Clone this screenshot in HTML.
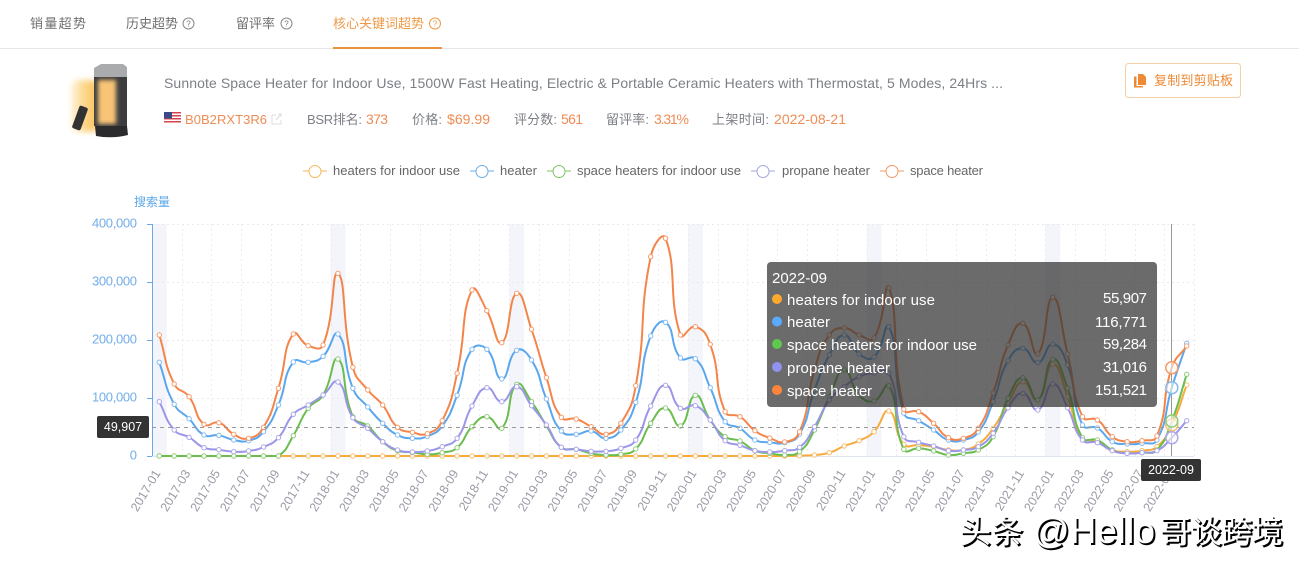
<!DOCTYPE html>
<html><head><meta charset="utf-8"><title>核心关键词趋势</title>
<style>
html,body{margin:0;padding:0;background:#fff;width:1299px;height:564px;overflow:hidden}
svg{display:block}
text{font-family:"Liberation Sans","Noto Sans CJK SC",sans-serif}
.tab{font-size:13px;fill:#6f6f6f}
.g{font-size:13px;fill:#7c7f86}
.t{font-size:14px;fill:#7c7f86}
.o{font-size:14px;fill:#ee8c55}
.yl{font-size:13px;fill:#72aeea;text-anchor:end}
.xl{font-size:12.5px;fill:#9a9ca6;text-anchor:end}
.lg{font-size:13px;fill:#666}
.tt{font-size:15px;fill:#fff}
.tv{font-size:15px;fill:#fff;text-anchor:end}
</style></head><body>
<svg id="s" width="1299" height="564" viewBox="0 0 1299 564" xmlns="http://www.w3.org/2000/svg">
<defs>
<linearGradient id="gl" x1="1" x2="0" y1="0" y2="0"><stop offset="0" stop-color="#fdc056"/><stop offset=".55" stop-color="#fdd88e"/><stop offset="1" stop-color="#fff3dc"/></linearGradient>
<filter id="b1" x="-30%" y="-30%" width="160%" height="160%"><feGaussianBlur stdDeviation="2"/></filter>
<filter id="b2" x="-30%" y="-30%" width="160%" height="160%"><feGaussianBlur stdDeviation="3"/></filter>
</defs>
<!-- tabs -->
<text class="tab" x="30" y="28" textLength="56">销量超势</text>
<text class="tab" x="126" y="28" textLength="52">历史超势</text>
<circle cx="188.500" cy="23.500" r="5.500" fill="none" stroke="#888" stroke-width="1"/><text x="188.500" y="26.500" font-size="8" fill="#777" text-anchor="middle">?</text>
<text class="tab" x="236" y="28" textLength="39">留评率</text>
<circle cx="286.500" cy="23.500" r="5.500" fill="none" stroke="#888" stroke-width="1"/><text x="286.500" y="26.500" font-size="8" fill="#777" text-anchor="middle">?</text>
<text class="tab" x="333" y="28" textLength="91" style="fill:#ee9a48">核心关键词超势</text>
<circle cx="435" cy="23.500" r="5.500" fill="none" stroke="#ee9a48" stroke-width="1"/><text x="435" y="26.500" font-size="8" fill="#ee9a48" text-anchor="middle">?</text>
<rect x="0" y="48" width="1299" height="1" fill="#e6e6e6"/>
<rect x="333" y="47" width="109" height="2" fill="#e8953f"/>
<!-- product image -->
<rect x="71" y="80" width="28" height="52" rx="8" fill="url(#gl)" filter="url(#b2)"/>
<path d="M94 68 L101 64 H123 L127 67 V77 H94Z" fill="#a9abad"/>
<rect x="94" y="77" width="33" height="49" fill="#3d3d3f"/>
<rect x="98" y="80" width="18" height="44" fill="#f8c476" filter="url(#b1)"/>
<path d="M95 126 H127 L128 135 Q112 139 96 136Z" fill="#2b2b2d"/>
<rect x="75.500" y="106" width="9" height="24" rx="2" transform="rotate(20 80 118)" fill="#333"/>
<!-- title -->
<text x="164" y="88" class="t" textLength="839">Sunnote Space Heater for Indoor Use, 1500W Fast Heating, Electric &amp; Portable Ceramic Heaters with Thermostat, 5 Modes, 24Hrs ...</text>
<!-- flag -->
<rect x="164" y="112" width="17" height="12" fill="#fff"/>
<g fill="#d5444f"><rect x="164" y="112" width="17" height="1.500"/><rect x="164" y="115" width="17" height="1.500"/><rect x="164" y="118" width="17" height="1.500"/><rect x="164" y="121" width="17" height="1.500"/></g>
<rect x="164" y="112" width="8" height="6.500" fill="#3b4a86"/>
<text x="185" y="124" class="o" style="font-size:13px" textLength="82">B0B2RXT3R6</text>
<path d="M272 115 H276 M272 115 V124 H281 V120 M276 120 L281 114 M278 114 H281 V117" fill="none" stroke="#ddd" stroke-width="1"/>
<text x="307" y="124" class="g" textLength="55">BSR排名:</text><text x="366" y="124" class="o" textLength="22">373</text>
<text x="412" y="124" class="g" textLength="30">价格:</text><text x="447" y="124" class="o" textLength="43">$69.99</text>
<text x="514" y="124" class="g" textLength="43">评分数:</text><text x="561" y="124" class="o" textLength="22">561</text>
<text x="606" y="124" class="g" textLength="43">留评率:</text><text x="654" y="124" class="o" textLength="35">3.31%</text>
<text x="712" y="124" class="g" textLength="57">上架时间:</text><text x="774" y="124" class="o" textLength="72">2022-08-21</text>
<!-- button -->
<rect x="1125.500" y="63.500" width="115" height="34" rx="3" fill="#fff" stroke="#f5cfa5"/>
<path d="M1138 74 H1143 L1146 77 V85 H1138Z M1134 76.500 H1136.500 V86 H1143 V87.500 H1134Z" fill="#ee8a35"/>
<text x="1154" y="85" font-size="13" fill="#ee8a35" textLength="79">复制到剪贴板</text>
<!-- legend -->
<g fill="#fff" stroke-width="1">
<path d="M303 171 H327" stroke="#f6b65a"/><circle cx="315" cy="171.500" r="6" stroke="#f6b65a"/>
<path d="M470 171 H494" stroke="#6aaee8"/><circle cx="482" cy="171.500" r="6" stroke="#6aaee8"/>
<path d="M547 171 H571" stroke="#7cc564"/><circle cx="559" cy="171.500" r="6" stroke="#7cc564"/>
<path d="M751 171 H775" stroke="#a3a5e0"/><circle cx="763" cy="171.500" r="6" stroke="#a3a5e0"/>
<path d="M880 171 H904" stroke="#f29a66"/><circle cx="892" cy="171.500" r="6" stroke="#f29a66"/>
</g>
<text class="lg" x="333" y="175" textLength="127">heaters for indoor use</text>
<text class="lg" x="500" y="175" textLength="37">heater</text>
<text class="lg" x="577" y="175" textLength="164">space heaters for indoor use</text>
<text class="lg" x="782" y="175" textLength="88">propane heater</text>
<text class="lg" x="910" y="175" textLength="73">space heater</text>
<!-- axis name + labels -->
<text x="134" y="206" font-size="12" fill="#5ba8e8" textLength="36">搜索量</text>
<text class="yl" x="137" y="227.500" textLength="45" >400,000</text>
<text class="yl" x="137" y="285.500" textLength="45">300,000</text>
<text class="yl" x="137" y="343.500" textLength="45">200,000</text>
<text class="yl" x="137" y="401.500" textLength="45">100,000</text>
<text class="yl" x="137" y="459.500">0</text>
<g id="grid"></g>
<g id="lines"></g>
<!-- x labels -->
<g id="xlabels">
<text class="xl" transform="translate(161 473) rotate(-59)">2017-01</text>
<text class="xl" transform="translate(190.800 473) rotate(-59)">2017-03</text>
<text class="xl" transform="translate(220.600 473) rotate(-59)">2017-05</text>
<text class="xl" transform="translate(250.300 473) rotate(-59)">2017-07</text>
<text class="xl" transform="translate(280.100 473) rotate(-59)">2017-09</text>
<text class="xl" transform="translate(309.900 473) rotate(-59)">2017-11</text>
<text class="xl" transform="translate(339.700 473) rotate(-59)">2018-01</text>
<text class="xl" transform="translate(369.500 473) rotate(-59)">2018-03</text>
<text class="xl" transform="translate(399.200 473) rotate(-59)">2018-05</text>
<text class="xl" transform="translate(429 473) rotate(-59)">2018-07</text>
<text class="xl" transform="translate(458.800 473) rotate(-59)">2018-09</text>
<text class="xl" transform="translate(488.600 473) rotate(-59)">2018-11</text>
<text class="xl" transform="translate(518.400 473) rotate(-59)">2019-01</text>
<text class="xl" transform="translate(548.100 473) rotate(-59)">2019-03</text>
<text class="xl" transform="translate(577.900 473) rotate(-59)">2019-05</text>
<text class="xl" transform="translate(607.700 473) rotate(-59)">2019-07</text>
<text class="xl" transform="translate(637.500 473) rotate(-59)">2019-09</text>
<text class="xl" transform="translate(667.300 473) rotate(-59)">2019-11</text>
<text class="xl" transform="translate(697 473) rotate(-59)">2020-01</text>
<text class="xl" transform="translate(726.800 473) rotate(-59)">2020-03</text>
<text class="xl" transform="translate(756.600 473) rotate(-59)">2020-05</text>
<text class="xl" transform="translate(786.400 473) rotate(-59)">2020-07</text>
<text class="xl" transform="translate(816.200 473) rotate(-59)">2020-09</text>
<text class="xl" transform="translate(845.900 473) rotate(-59)">2020-11</text>
<text class="xl" transform="translate(875.700 473) rotate(-59)">2021-01</text>
<text class="xl" transform="translate(905.500 473) rotate(-59)">2021-03</text>
<text class="xl" transform="translate(935.300 473) rotate(-59)">2021-05</text>
<text class="xl" transform="translate(965.100 473) rotate(-59)">2021-07</text>
<text class="xl" transform="translate(994.800 473) rotate(-59)">2021-09</text>
<text class="xl" transform="translate(1024.600 473) rotate(-59)">2021-11</text>
<text class="xl" transform="translate(1054.400 473) rotate(-59)">2022-01</text>
<text class="xl" transform="translate(1084.200 473) rotate(-59)">2022-03</text>
<text class="xl" transform="translate(1114 473) rotate(-59)">2022-05</text>
<text class="xl" transform="translate(1143.700 473) rotate(-59)">2022-07</text>
<text class="xl" transform="translate(1173.500 473) rotate(-59)">2022-09</text>
</g>
<!-- pointer -->
<path d="M152 427.500 H1194" stroke="#999" stroke-width="1" stroke-dasharray="4 4" fill="none"/>
<path d="M1171.500 224 V456" stroke="#999" stroke-width="1"/>
<rect x="97" y="416" width="52" height="22" rx="2" fill="#333"/>
<text x="123" y="431" font-size="12.500" fill="#fff" text-anchor="middle">49,907</text>
<rect x="1141" y="459" width="60" height="22" rx="2" fill="#333"/>
<text x="1171" y="474" font-size="12.500" fill="#fff" text-anchor="middle">2022-09</text>
<g id="hi"></g>
<!-- tooltip -->
<rect x="767" y="262" width="390" height="145" rx="4" fill="#323232" fill-opacity=".72"/>
<text class="tt" x="772" y="283" textLength="55">2022-09</text>
<circle cx="777" cy="299" r="5" fill="#ffa82e"/><text class="tt" x="787" y="305" textLength="148">heaters for indoor use</text><text class="tv" x="1147" y="303" textLength="44">55,907</text>
<circle cx="777" cy="321.500" r="5" fill="#5aaaff"/><text class="tt" x="787" y="327" textLength="43">heater</text><text class="tv" x="1147" y="327" textLength="52">116,771</text>
<circle cx="777" cy="344" r="5" fill="#5fc94c"/><text class="tt" x="787" y="350" textLength="190">space heaters for indoor use</text><text class="tv" x="1147" y="349" textLength="44">59,284</text>
<circle cx="777" cy="367" r="5" fill="#9191f0"/><text class="tt" x="787" y="373" textLength="103">propane heater</text><text class="tv" x="1147" y="372" textLength="44">31,016</text>
<circle cx="777" cy="390" r="5" fill="#ff843c"/><text class="tt" x="787" y="396" textLength="85">space heater</text><text class="tv" x="1147" y="395" textLength="52">151,521</text>
<!-- watermark -->
<g fill="#000" stroke="#000" stroke-width=".9">
<text x="961.500" y="544.500" font-size="31" textLength="63">头条</text>
<text x="1034.500" y="544.500" font-size="36" textLength="122">@Hello</text>
<text x="1161.500" y="544.500" font-size="31" textLength="123">哥谈跨境</text>
</g>
<g fill="#fff">
<text x="960" y="543" font-size="31" textLength="63">头条</text>
<text x="1033" y="543" font-size="36" textLength="122">@Hello</text>
<text x="1160" y="543" font-size="31" textLength="123">哥谈跨境</text>
</g>
</svg>
<script>
(function(){
var NS='http://www.w3.org/2000/svg';
function el(n,a,p){var e=document.createElementNS(NS,n);for(var k in a)e.setAttribute(k,a[k]);p.appendChild(e);return e}
var X=function(i){return 159.3+i*14.89};
var grid=document.getElementById('grid');
[0,12,24,36,48,60].forEach(function(i){el('rect',{x:X(i)-7.4,y:224,width:14.9,height:232,fill:'#f3f5fa'},grid)});
[224,282,340,398].forEach(function(y){el('path',{d:'M152 '+(y+.5)+' H1194',stroke:'#e9e9ee','stroke-dasharray':'2 3',fill:'none'},grid)});
for(var i=2;i<=70;i+=2){var x=Math.round(X(i)-7.45)+.5;el('path',{d:'M'+x+' 224 V456',stroke:'#ececf0','stroke-dasharray':'2 3',fill:'none'},grid)}
el('path',{d:'M152 456.500 H1194',stroke:'#e0e6f1',fill:'none'},grid);
el('path',{d:'M152.500 224 V456 M147 224.500 H152 M147 282.500 H152 M147 340.500 H152 M147 398.500 H152 M147 456.500 H152',stroke:'#6aa8ea',fill:'none'},grid);
var Y=[];for(i=0;i<43;i++)Y.push(456);
Y=Y.concat([455.700,455,452.700,446,440.700,431.700,411,444.300,445,446.700,450,450,444,428.300,403.300,381.700,400,364,396.700,440,441.700,450,451.700,450.700,446.700,425,385]);
var B=[362.300,404.300,418.700,435,435.300,440,440.700,431.700,405,362,362.300,356.300,334,388.300,407,423.300,435,438.300,436.300,426,395.300,349.300,349.300,379,350.300,360,399,431,434.300,431,438.300,430,402.300,336,322.300,358,358.700,387.700,421.700,428.300,440,442.300,442.700,434,390,355,335,354,357,326.700,413,420.700,430,440,440,432,401.700,360.700,348.300,362.700,344.300,365,425,428,441.700,444,443.300,440,387.700,343.300];
var G=[456,456,456,456,456,456,456,456,456,435.700,408.300,395,359,416.700,426,441.700,450.700,452.300,454.300,452.700,447.700,426.700,416.700,428.300,384.300,401.700,425.700,447.300,449.300,453.300,455,454.300,449,423.300,408,426,395.300,420,436.700,441,450.700,453.300,455,451.700,430,396.700,370,395,401,385.700,449.300,448.300,451,455,453.300,450,436.700,398.300,377.700,400,359.300,388.300,437.700,440,450,453.300,452.700,450,421,374.300];
var P=[401.700,430,437.300,447.700,449.700,451.700,451,447,437.700,414.300,405,395,382,417.700,428.300,441.700,450,452,451,446.700,438.300,406,387.700,401.700,386.700,405.700,425,447.300,449.300,451.300,451.300,448.300,440,406,385.300,408.300,405.700,420,440.700,445.300,450.700,452,450.700,447.300,426.700,400,386.700,376.700,373,373,436.700,442.300,446,450.700,450,446.700,433.300,407.700,393.300,410,384,407.700,440,442.700,450.700,453.300,452.700,450.700,437.700,420.700];
var O=[335,384,396.700,424.300,422.700,434.300,438.300,427.300,388.300,334,345.700,345,273.300,367.300,390,405,427.300,432.300,433.700,420.700,373.300,290,310.700,342.700,293.300,329.300,377.700,417.300,419,426.700,434.300,423.300,385.700,256.700,238.300,335,326.700,344.300,411.700,416.700,430.700,438,442,431.700,370,335,328,335,338,288,409.300,411.700,423.300,437.700,438.300,428.300,393,345,323.300,354,297.300,354,416.700,420,436.700,441.700,440.700,436,367.700,346];
var series=[[Y,'#f6ab3c','#f7bd6e'],[B,'#5aa7ee','#86bcf1'],[G,'#6bbd4f','#8fcc7a'],[P,'#9b96e8','#aca8ec'],[O,'#f4854a','#f59c6c']];
var L=document.getElementById('lines'),H=document.getElementById('hi');
function path(d){
 var pts=d.map(function(y,i){return [X(i),y]}),s='M'+pts[0][0].toFixed(1)+' '+pts[0][1].toFixed(1);
 function cps(i){
  var c=pts[i],p=pts[i-1]||c,n=pts[i+1]||c;
  var vx=n[0]-p[0],vy=n[1]-p[1];
  var lp=Math.hypot(c[0]-p[0],c[1]-p[1]),ln=Math.hypot(n[0]-c[0],n[1]-c[1]);
  var r=(lp+ln)?ln/(lp+ln):0;
  var a=[c[0]+vx*.5*r,Math.min(456,c[1]+vy*.5*r)];
  var b=[c[0]-vx*.5*(1-r),Math.min(456,c[1]-vy*.5*(1-r))];
  return [b,a];
 }
 for(var i=0;i<pts.length-1;i++){
  var a=cps(i)[1],b=cps(i+1)[0],e=pts[i+1];
  s+='C'+a[0].toFixed(1)+' '+a[1].toFixed(1)+' '+b[0].toFixed(1)+' '+b[1].toFixed(1)+' '+e[0].toFixed(1)+' '+e[1].toFixed(1);
 }
 return s;
}
series.forEach(function(sr){
 el('path',{d:path(sr[0]),fill:'none',stroke:sr[1],'stroke-width':2},L);
 sr[0].forEach(function(y,i){
  if(i==68){el('circle',{cx:X(i),cy:y,r:6,fill:'#fff','fill-opacity':.55,stroke:sr[2],'stroke-width':1.500},H);return}
  el('circle',{cx:X(i),cy:y,r:2.200,fill:'#fff',stroke:sr[2],'stroke-width':1},L);
 });
});
})();
</script>
</body></html>
